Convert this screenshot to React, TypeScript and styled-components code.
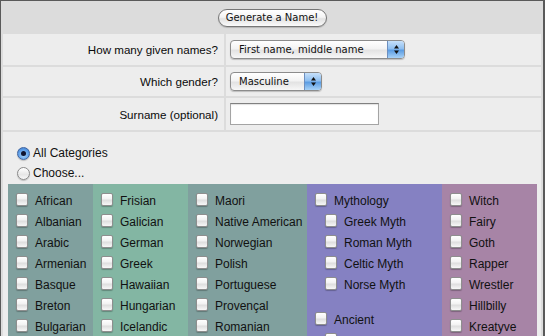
import React from "react";
import styled, { createGlobalStyle } from "styled-components";

const GlobalStyle = createGlobalStyle`
  html, body {
    margin: 0;
    padding: 0;
    background: #555;
    overflow: hidden;
  }
`

const Frame = styled.div`
  width: 545px;
  height: 336px;
  box-sizing: border-box;
  border-top: 1px solid #5a5a5a;
  border-left: 1px solid #5a5a5a;
  border-right: 2px solid #5a5a5a;
  background: #dcdcdc;
  overflow: hidden;
  font-family: "Liberation Sans", Arial, sans-serif;
  color: #111;
`

const FormTable = styled.div`
  display: grid;
  grid-template-columns: 221px 1fr;
  grid-template-rows: 29px 31px 29px 32px auto;
  gap: 2px;
  padding: 2px;
`

const HeaderCell = styled.div`
  grid-column: 1 / -1;
  display: flex;
  align-items: center;
  justify-content: center;
`

const PillButton = styled.button`
  width: 109px;
  height: 18px;
  padding: 0;
  border: 1px solid #767676;
  border-radius: 9px;
  background: linear-gradient(#ffffff 0%, #f4f4f4 45%, #e2e2e2 55%, #fbfbfb 100%);
  box-shadow: 0 1px 1px rgba(0, 0, 0, 0.18);
  font-family: "DejaVu Sans", sans-serif;
  font-size: 10px;
  color: #111;
`

const LabelCell = styled.div`
  background: #ededed;
  display: flex;
  align-items: center;
  justify-content: flex-end;
  padding-right: 6px;
  font-size: 11.6px;
  color: #0a0a0a;
`

const FieldCell = styled.div`
  background: #ededed;
  display: flex;
  align-items: center;
  padding-left: 4px;
`

const PopUp = styled.div<{ $width: number }>`
  width: ${p => p.$width}px;
  height: 19px;
  box-sizing: border-box;
  display: flex;
  align-items: stretch;
  border: 1px solid #8c8c8c;
  border-radius: 4px;
  overflow: hidden;
  background: linear-gradient(#ffffff 0%, #f3f3f3 45%, #e3e3e3 55%, #f7f7f7 100%);
  box-shadow: 0 1px 1px rgba(0, 0, 0, 0.2);
  font-family: "DejaVu Sans", sans-serif;
  font-size: 10px;
`

const PopUpValue = styled.span`
  flex: 1;
  display: flex;
  align-items: center;
  padding-left: 8px;
`

const Stepper = styled.span`
  width: 16px;
  display: flex;
  align-items: center;
  justify-content: center;
  border-left: 1px solid #6d8fbf;
  background: linear-gradient(#c6e0fa 0%, #8fbff0 45%, #5c9de3 55%, #a8d2f7 100%);
`

const TextBox = styled.input`
  width: 149px;
  height: 22px;
  box-sizing: border-box;
  border: 1px solid #a4a4a4;
  border-top-color: #808080;
  background: #fff;
  box-shadow: inset 0 1px 1px rgba(0, 0, 0, 0.12);
  margin: 0;
`

const CategoryCell = styled.div`
  grid-column: 1 / -1;
  background: #ededed;
  padding: 11px 4px 0 5px;
`

const RadioRow = styled.label`
  height: 20px;
  display: flex;
  align-items: center;
  gap: 3px;
  padding-left: 9px;
  font-size: 12px;
`

const Radio = styled.span<{ $on?: boolean }>`
  width: 13px;
  height: 13px;
  border-radius: 50%;
  box-sizing: border-box;
  display: flex;
  align-items: center;
  justify-content: center;
  border: 1px solid ${p => (p.$on ? "#3f64a0" : "#8a8a8a")};
  background: ${p =>
    p.$on
      ? "radial-gradient(circle at 50% 65%, #a9d4fa 0%, #5b9ce6 60%, #3c78c8 100%)"
      : "linear-gradient(#ffffff, #e6e6e6 60%, #f8f8f8)"};
  box-shadow: 0 1px 1px rgba(0, 0, 0, 0.2);

  &::after {
    content: "";
    display: ${p => (p.$on ? "block" : "none")};
    width: 5px;
    height: 5px;
    border-radius: 50%;
    background: #0f1430;
  }
`

const Palette = styled.div`
  margin-top: 1px;
  display: grid;
  grid-template-columns: 85px 95px 119px 135px 95px;
`

const Column = styled.div<{ $bg: string }>`
  background: ${p => p.$bg};
  padding-top: 6px;
  min-height: 200px;
`

const CheckRow = styled.label<{ $indent?: boolean; $gapAbove?: boolean }>`
  height: 21px;
  display: flex;
  align-items: center;
  gap: 7px;
  padding-left: ${p => (p.$indent ? 18 : 8)}px;
  margin-top: ${p => (p.$gapAbove ? 14 : 0)}px;
  font-size: 12px;
  white-space: nowrap;
`

const Box = styled.span`
  width: 12px;
  height: 13px;
  flex: none;
  box-sizing: border-box;
  border: 1px solid #8e8e8e;
  border-radius: 2px;
  margin-top: -2px;
  background: linear-gradient(#ffffff 0%, #f2f2f2 45%, #dedede 55%, #f7f7f7 100%);
  box-shadow: 0 1px 1px rgba(0, 0, 0, 0.25);
`

const Arrows = () => (
  <svg width="7" height="11" viewBox="0 0 7 11">
    <path d="M3.5 1 L6 4.5 L1 4.5 Z" fill="#111" />
    <path d="M3.5 10 L6 6.5 L1 6.5 Z" fill="#111" />
  </svg>
)

type Item = { name: string; indent?: boolean; gapAbove?: boolean }

const columns: { bg: string; items: Item[] }[] = [
  {
    bg: "#80a09e",
    items: ["African", "Albanian", "Arabic", "Armenian", "Basque", "Breton", "Bulgarian"].map(name => ({ name })),
  },
  {
    bg: "#83b6a3",
    items: ["Frisian", "Galician", "German", "Greek", "Hawaiian", "Hungarian", "Icelandic"].map(name => ({ name })),
  },
  {
    bg: "#80a09e",
    items: ["Maori", "Native American", "Norwegian", "Polish", "Portuguese", "Provençal", "Romanian"].map(name => ({ name })),
  },
  {
    bg: "#8581c2",
    items: [
      { name: "Mythology" },
      { name: "Greek Myth", indent: true },
      { name: "Roman Myth", indent: true },
      { name: "Celtic Myth", indent: true },
      { name: "Norse Myth", indent: true },
      { name: "Ancient", gapAbove: true },
      { name: "", indent: true },
    ],
  },
  {
    bg: "#a784a6",
    items: ["Witch", "Fairy", "Goth", "Rapper", "Wrestler", "Hillbilly", "Kreatyve"].map(name => ({ name })),
  },
]

export default function App() {
  return (
    <>
      <GlobalStyle />
      <Frame>
        <FormTable>
          <HeaderCell>
            <PillButton type="button">Generate a Name!</PillButton>
          </HeaderCell>

          <LabelCell>How many given names?</LabelCell>
          <FieldCell>
            <PopUp $width={175}>
              <PopUpValue>First name, middle name</PopUpValue>
              <Stepper><Arrows /></Stepper>
            </PopUp>
          </FieldCell>

          <LabelCell>Which gender?</LabelCell>
          <FieldCell>
            <PopUp $width={92}>
              <PopUpValue>Masculine</PopUpValue>
              <Stepper><Arrows /></Stepper>
            </PopUp>
          </FieldCell>

          <LabelCell>Surname (optional)</LabelCell>
          <FieldCell>
            <TextBox type="text" />
          </FieldCell>

          <CategoryCell>
            <RadioRow>
              <Radio $on />
              All Categories
            </RadioRow>
            <RadioRow>
              <Radio />
              Choose...
            </RadioRow>
            <Palette>
              {columns.map((col, i) => (
                <Column key={i} $bg={col.bg}>
                  {col.items.map((item, j) => (
                    <CheckRow key={j} $indent={item.indent} $gapAbove={item.gapAbove}>
                      <Box />
                      {item.name}
                    </CheckRow>
                  ))}
                </Column>
              ))}
            </Palette>
          </CategoryCell>
        </FormTable>
      </Frame>
    </>
  )
}
